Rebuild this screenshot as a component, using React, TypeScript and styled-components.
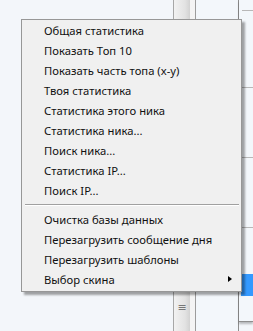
import React from "react";
import styled, { createGlobalStyle, css } from "styled-components";

const GlobalStyle = createGlobalStyle`
  html, body {
    margin: 0;
    padding: 0;
    background: #f3f6fa;
  }
`;

const menuItems: { label: string; submenu?: boolean; separatorBefore?: boolean }[] = [
  { label: "Общая статистика" },
  { label: "Показать Топ 10" },
  { label: "Показать часть топа (x-y)" },
  { label: "Твоя статистика" },
  { label: "Статистика этого ника" },
  { label: "Статистика ника..." },
  { label: "Поиск ника..." },
  { label: "Статистика IP..." },
  { label: "Поиск IP..." },
  { label: "Очистка базы данных", separatorBefore: true },
  { label: "Перезагрузить сообщение дня" },
  { label: "Перезагрузить шаблоны" },
  { label: "Выбор скина", submenu: true },
];

const App: React.FunctionComponent = () => {
  return (
    <>
      <GlobalStyle />
      <Desktop>
        <LeftArea />
        <Splitter>
          <Grip>≡</Grip>
        </Splitter>
        <Gutter />
        <SidePanel />
        <ParentMenu>
          <ParentRow height={10} />
          <ParentRow height={76} />
          <ParentRow height={69} />
          <ParentRow height={69} />
          <ParentRow height={46} last />
          <ParentHighlight />
          <ParentRow height={29} last />
        </ParentMenu>

        <PopupMenu>
          {menuItems.map((item) => (
            <React.Fragment key={item.label}>
              {item.separatorBefore && <Separator />}
              <MenuItem>
                {item.label}
                {item.submenu && <SubArrow />}
              </MenuItem>
            </React.Fragment>
          ))}
        </PopupMenu>
      </Desktop>
    </>
  );
};

export default App;

const Desktop = styled.div`
  position: relative;
  width: 253px;
  height: 331px;
  overflow: hidden;
  display: flex;
  background: #f3f6fa;
  font-family: "Noto Sans", "DejaVu Sans", sans-serif;
`;

const LeftArea = styled.div`
  flex: 0 0 173px;
  background: #f3f6fa;
`;

const Splitter = styled.div`
  flex: 0 0 16px;
  border-left: 1px solid #a7a7a7;
  background: linear-gradient(to right, #f2f2f2, #e2e2e2 70%, #d2d2d2);
  display: flex;
  flex-direction: column;
  justify-content: flex-end;
  align-items: center;
`;

const Grip = styled.div`
  font-size: 11px;
  line-height: 11px;
  color: #777;
  margin-bottom: 19px;
`;

const Gutter = styled.div`
  flex: 0 0 5px;
  background: #f4f4f4;
  border-right: 1px solid #9c9c9c;
`;

const SidePanel = styled.div`
  flex: 0 0 42px;
  background: #f3f7fb;
  border-right: 1px solid #8e8e8e;
`;

const ParentMenu = styled.div`
  flex: 1 1 auto;
  display: flex;
  flex-direction: column;
  align-self: flex-start;
  height: 321px;
  background: #f3f7fb;
  border-bottom: 1px solid #8e8e8e;
  box-shadow: 0 2px 2px rgba(0, 0, 0, 0.25);
`;

const ParentRow = styled.div<{ height: number; last?: boolean }>`
  flex: 0 0 ${({ height }) => height}px;
  margin-left: 3px;
  ${({ last }) =>
    !last &&
    css`
      border-bottom: 1px solid #b8b8b8;
    `}
`;

const ParentHighlight = styled.div`
  flex: 0 0 22px;
  margin-left: 2px;
  background: #3399ff;
`;

const PopupMenu = styled.div`
  position: absolute;
  left: 21px;
  top: 19px;
  width: 219px;
  padding: 1px 0;
  background: #f0f0f0;
  border: 1px solid #979797;
  box-shadow: 3px 3px 2px rgba(0, 0, 0, 0.35);
  display: flex;
  flex-direction: column;
`;

const MenuItem = styled.div`
  position: relative;
  height: 20px;
  line-height: 20px;
  padding-left: 22px;
  font-size: 11.25px;
  color: #111;
  white-space: nowrap;
`;

const SubArrow = styled.span`
  position: absolute;
  left: 206px;
  top: 6px;
  width: 0;
  height: 0;
  border-top: 3.5px solid transparent;
  border-bottom: 3.5px solid transparent;
  border-left: 4px solid #000;
`;

const Separator = styled.div`
  height: 9px;
  margin: 0 2px 0 3px;
  box-sizing: border-box;
  padding-top: 3px;
  &::after {
    content: "";
    display: block;
    height: 1px;
    background: #a0a0a0;
    border-bottom: 1px solid #ffffff;
  }
`;
